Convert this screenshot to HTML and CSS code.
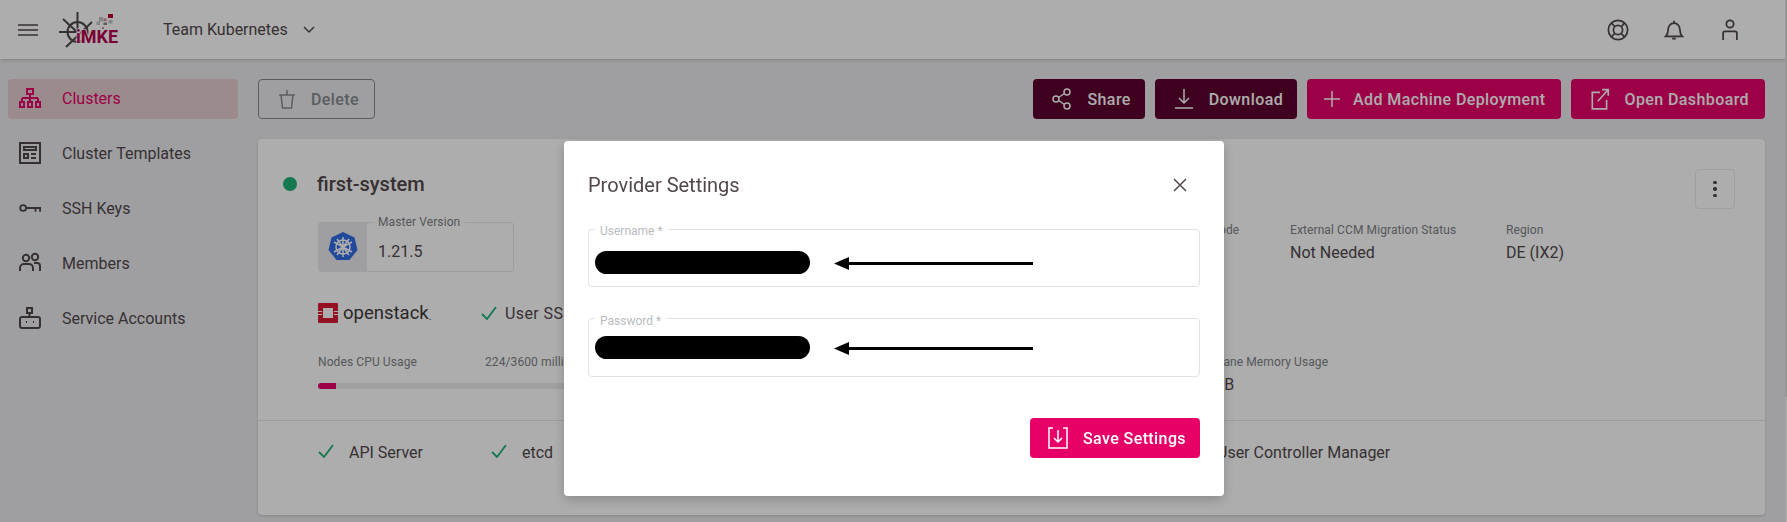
FILE: index.html
```html
<!DOCTYPE html>
<html lang="en">

<head>
    <meta charset="UTF-8">
    <meta name="viewport" content="width=device-width, initial-scale=1.0">
    <title>Cluster details</title>
    <link rel="stylesheet" href="styles.css">
</head>

<body>
    <header class="topbar">
        <svg class="icon-menu" viewBox="0 0 20 12"><path d="M0 1h20M0 6h20M0 11h20" /></svg>
        <div class="logo">
            <svg viewBox="0 0 60 36">
                <g class="wheel">
                    <circle cx="19.500" cy="20" r="10" />
                    <path d="M19.500 0v20M1 20h18M5 7l14 13M34 10L8 35" />
                </g>
                <rect class="pixel-red" x="50" y="2" width="5" height="4" />
                <rect class="pixel-gray" x="41" y="5" width="4" height="4.500" />
                <rect class="pixel-gray" x="38.500" y="9.500" width="3.500" height="3.500" />
                <rect class="pixel-pink" x="45.500" y="6.500" width="3" height="2.500" />
                <rect class="pixel-dark" x="45.500" y="10.500" width="3.500" height="2.500" />
                <rect class="pixel-gray" x="50.500" y="8" width="4" height="3.500" />
                <rect class="pixel-pink" x="44" y="15" width="2" height="2" />
                <text class="logo-text" x="18" y="31">iMKE</text>
            </svg>
        </div>
        <div class="team">Team Kubernetes</div>
        <svg class="icon-chevron" viewBox="0 0 12 8"><path d="M1 1l5 5 5-5" /></svg>
        <div class="top-icons">
            <svg viewBox="0 0 24 24"><circle cx="12" cy="12" r="10.500" /><circle cx="12" cy="12" r="5" /><path d="M5 4.500l3.500 4M19 4.500l-3.500 4M5 19.500l3.500-4M19 19.500l-3.500-4" /></svg>
            <svg viewBox="0 0 24 24"><path d="M3 19c2-2 2.500-3 2.500-7 0-4 2.500-7.500 6.500-7.500s6.500 3.500 6.500 7.500c0 4 .5 5 2.500 7zM12 2v2.500M10 21.500h4" /></svg>
            <svg viewBox="0 0 24 24"><circle cx="12" cy="5.500" r="4" /><path d="M4.500 23v-7.500a2 2 0 0 1 2-2h11a2 2 0 0 1 2 2V23" /></svg>
        </div>
    </header>

    <div class="page">
        <nav class="sidebar">
            <a class="nav-item active">
                <svg viewBox="0 0 22 20"><path d="M8 1h6v5H8zM11 6v4M3 10h16M3 10v4M11 10v4M19 10v4M1 14h4v5H1zM9 14h4v5H9zM17 14h4v5h-4z" /></svg>
                Clusters
            </a>
            <a class="nav-item">
                <svg viewBox="0 0 22 22"><path d="M1 1h20v20H1zM5 5h12v3H5zM5 12h4v4H5zM12 12h5M12 16h5" /></svg>
                Cluster Templates
            </a>
            <a class="nav-item">
                <svg viewBox="0 0 24 12"><circle cx="4.500" cy="6" r="3.200" /><path d="M8 6h15v4M18 6v4" /></svg>
                SSH Keys
            </a>
            <a class="nav-item">
                <svg viewBox="0 0 22 20"><circle cx="7" cy="5" r="3.200" /><circle cx="16" cy="4" r="3.200" /><path d="M1 18v-3a4 4 0 0 1 4-4h5a4 4 0 0 1 4 4v3M15 10h3a3 3 0 0 1 3 3v5" /></svg>
                Members
            </a>
            <a class="nav-item">
                <svg viewBox="0 0 22 22"><path d="M8 1h5v5H8zM10.500 6v4M3 10h16a2 2 0 0 1 2 2v7a2 2 0 0 1-2 2H3a2 2 0 0 1-2-2v-7a2 2 0 0 1 2-2zM7 15h1M14 15h1" /></svg>
                Service Accounts
            </a>
        </nav>

        <main class="main">
            <div class="actions">
                <button class="btn btn-outline">
                    <svg viewBox="0 0 16 19"><path d="M0 5h16M8 0v5M2 5l1.500 13h9L14 5" /></svg>
                    Delete
                </button>
                <div class="actions-right">
                    <button class="btn btn-dark">
                        <svg viewBox="0 0 20 22"><circle cx="4" cy="11" r="3" /><circle cx="15" cy="4" r="3" /><circle cx="15" cy="18" r="3" /><path d="M6.500 9.500l6-4M6.500 12.500l6 4" /></svg>
                        Share
                    </button>
                    <button class="btn btn-dark">
                        <svg viewBox="0 0 20 22"><path d="M10 1v14M5 10l5 5 5-5M1 20h18" /></svg>
                        Download
                    </button>
                    <button class="btn btn-primary btn-add">
                        <svg class="small" viewBox="0 0 16 16"><path d="M8 0v16M0 8h16" /></svg>
                        Add Machine Deployment
                    </button>
                    <button class="btn btn-primary">
                        <svg viewBox="0 0 18 20"><path d="M9 4H2v15h13v-8M7 12l9-10M11 1.500h5.500V7" /></svg>
                        Open Dashboard
                    </button>
                </div>
            </div>

            <section class="card">
                <div class="card-top">
                    <div class="card-title">
                        <span class="dot"></span>
                        <h2>first-system</h2>
                    </div>
                    <button class="kebab"><span></span><span></span><span></span></button>

                    <div class="info-row">
                        <div class="version">
                            <div class="version-icon">
                                <svg viewBox="0 0 32 32">
                                    <path class="k8s" d="M16 1l11.500 5.500 3 12.500-8 10H9.500l-8-10 3-12.500z" />
                                    <g class="k8s-wheel">
                                        <circle cx="16" cy="16" r="7" />
                                        <path d="M16 6v20M7 11l18 10M25 11L7 21M10 8l12 16M22 8L10 24" />
                                    </g>
                                </svg>
                            </div>
                            <div class="version-value">
                                <span class="version-label">Master Version</span>
                                1.21.5
                            </div>
                        </div>
                        <div class="info info-proxy"><span class="label">Proxy Mode</span><span>ipvs</span></div>
                        <div class="info info-ccm"><span class="label">External CCM Migration Status</span><span>Not Needed</span></div>
                        <div class="info"><span class="label">Region</span><span>DE (IX2)</span></div>
                    </div>

                    <div class="provider-row">
                        <div class="openstack">
                            <svg viewBox="0 0 20 20"><path class="os-red" d="M1 0h18a1 1 0 0 1 1 1v18a1 1 0 0 1-1 1H1a1 1 0 0 1-1-1V1a1 1 0 0 1 1-1zM5 5v10h10V5zM0 8v1h4V8zM0 11v1h4v-1zM16 8v1h4V8zM16 11v1h4v-1z" /></svg>
                            openstack<small>.</small>
                        </div>
                        <div class="check-item">
                            <svg class="check" viewBox="0 0 16 14"><path d="M1 8l5 5 9-12" /></svg>
                            User SSH Keys Agent
                        </div>
                    </div>

                    <div class="usage-row">
                        <div class="usage">
                            <div class="usage-head"><span>Nodes CPU Usage</span><span class="usage-num">224/3600 millicores</span></div>
                            <div class="bar"><div class="bar-fill" style="width: 4.5%"></div></div>
                        </div>
                        <div class="info info-memory"><span class="label">Control Plane Memory Usage</span><span>320.4MB</span></div>
                    </div>
                </div>

                <div class="health">
                    <div class="health-item">
                        <svg class="check" viewBox="0 0 16 14"><path d="M1 8l5 5 9-12" /></svg>
                        API Server
                    </div>
                    <div class="health-item">
                        <svg class="check" viewBox="0 0 16 14"><path d="M1 8l5 5 9-12" /></svg>
                        etcd
                    </div>
                    <div class="health-item health-last">User Controller Manager</div>
                </div>
            </section>
        </main>
    </div>

    <div class="scrollbar"><div class="scrollbar-thumb"></div></div>

    <div class="overlay"></div>

    <div class="dialog">
        <div class="dialog-head">
            <h3>Provider Settings</h3>
            <svg class="icon-close" viewBox="0 0 14 14"><path d="M1 1l12 12M13 1L1 13" /></svg>
        </div>
        <div class="field">
            <span class="field-label">Username *</span>
            <div class="field-value">
                <span class="redacted"></span>
                <svg class="arrow" viewBox="0 0 199 14"><path d="M14 6h185v3H14zM0 7.500L15 1v13z" /></svg>
            </div>
        </div>
        <div class="field field-password">
            <span class="field-label">Password *</span>
            <div class="field-value">
                <span class="redacted"></span>
                <svg class="arrow" viewBox="0 0 199 14"><path d="M14 6h185v3H14zM0 7.500L15 1v13z" /></svg>
            </div>
        </div>
        <div class="dialog-foot">
            <button class="btn btn-save">
                <svg viewBox="0 0 20 22"><path d="M5 1H1v20h18V1h-4M10 3v12M6 11l4 4 4-4" /></svg>
                Save Settings
            </button>
        </div>
    </div>
</body>

</html>
```

FILE: styles.css
```css
* {
    box-sizing: border-box;
}

html,
body {
    height: 100%;
    overflow: hidden;
}

body {
    margin: 0;
    font-family: Roboto, sans-serif;
    font-size: 16px;
    color: #52484c;
    background-color: #eaebee;
}

svg {
    fill: none;
    stroke: currentColor;
    stroke-width: 1.5;
    flex-shrink: 0;
}

.topbar {
    display: flex;
    align-items: center;
    height: 59px;
    padding-left: 18px;
    background-color: #ffffff;
    box-shadow: 0 1px 4px rgba(0, 0, 0, .2);
}

.icon-menu {
    width: 20px;
    height: 12px;
    margin-right: 20px;
    stroke-width: 1.6;
}

.logo {
    width: 60px;
    height: 36px;
    margin-right: 45px;
}

.logo svg {
    width: 60px;
    height: 36px;
    display: block;
    overflow: visible;
}

.wheel {
    stroke: #52484c;
    stroke-width: 2;
}

.pixel-red {
    fill: #b8002f;
    stroke: none;
}

.pixel-gray {
    fill: #c4c4c4;
    stroke: none;
}

.pixel-dark {
    fill: #8a8a8a;
    stroke: none;
}

.pixel-pink {
    fill: #c98a9c;
    stroke: none;
}

.logo-text {
    fill: #b8004f;
    stroke: #ffffff;
    stroke-width: 1.5;
    paint-order: stroke;
    font-family: Roboto, sans-serif;
    font-weight: 700;
    font-size: 18px;
}

.team {
    margin-right: 15px;
}

.icon-chevron {
    width: 12px;
    height: 8px;
}

.top-icons {
    display: flex;
    gap: 34px;
    margin-left: auto;
    margin-right: 46px;
}

.top-icons svg {
    width: 22px;
    height: 22px;
    stroke-width: 1.9;
}

.page {
    display: flex;
    padding-top: 20px;
}

.sidebar {
    display: flex;
    flex-direction: column;
    gap: 15px;
    width: 258px;
    padding-left: 8px;
    padding-right: 20px;
    flex-shrink: 0;
}

.nav-item {
    display: flex;
    align-items: center;
    height: 40px;
    padding-left: 11px;
    padding-bottom: 2px;
    gap: 21px;
    border-radius: 4px;
}

.nav-item svg {
    width: 22px;
    height: 22px;
    stroke-width: 2;
}

.nav-item.active {
    background-color: #e6cdd0;
    color: #e60067;
}

.main {
    width: 1507px;
}

.actions {
    display: flex;
    justify-content: space-between;
    height: 40px;
}

.actions-right {
    display: flex;
    gap: 10px;
}

.btn {
    display: flex;
    align-items: center;
    height: 40px;
    padding: 0 16px 0 19px;
    gap: 15px;
    border: none;
    border-radius: 4px;
    font-family: inherit;
    font-size: 16px;
    font-weight: 500;
    letter-spacing: .4px;
    white-space: nowrap;
    color: #ffffff;
}

.btn svg {
    width: 20px;
    height: 22px;
}

.btn svg.small {
    width: 16px;
    height: 16px;
}

.btn-add {
    gap: 13px;
    padding-left: 17px;
    padding-right: 15px;
}

.btn-outline {
    width: 117px;
    padding-left: 20px;
    gap: 16px;
    background: none;
    border: 1px solid #868a90;
    color: #868a90;
}

.btn-outline svg {
    width: 16px;
    height: 19px;
}

.btn-dark {
    padding-right: 14px;
    background-color: #5d002e;
}

.btn-primary {
    background-color: #e60067;
}

.card {
    height: 376px;
    margin-top: 20px;
    border-radius: 4px;
    background-color: #ffffff;
    box-shadow: 0 1px 3px rgba(0, 0, 0, .15);
}

.card-top {
    position: relative;
    height: 282px;
    padding: 0 60px;
    border-bottom: 1px solid #e6e6e6;
}

.card-title {
    display: flex;
    align-items: center;
    gap: 20px;
    height: 83px;
    padding-top: 6px;
    margin-left: -35px;
}

.card-title h2 {
    margin: 0;
    font-size: 20px;
    font-weight: 500;
}

.dot {
    width: 14px;
    height: 14px;
    border-radius: 50%;
    background-color: #1eb377;
}

.kebab {
    position: absolute;
    top: 30px;
    right: 30px;
    display: flex;
    flex-direction: column;
    align-items: center;
    justify-content: center;
    gap: 3px;
    width: 40px;
    height: 40px;
    padding: 0;
    border: 1px solid #ececec;
    border-radius: 4px;
    background: none;
}

.kebab span {
    width: 3.5px;
    height: 3.5px;
    border-radius: 50%;
    background-color: #52484c;
}

.info-row {
    display: flex;
    height: 50px;
}

.version {
    display: flex;
    width: 196px;
    height: 50px;
    border: 1px solid #e8e8e8;
    border-radius: 4px;
}

.version-icon {
    display: flex;
    align-items: center;
    justify-content: center;
    width: 49px;
    margin: -1px 0 -1px -1px;
    border-radius: 4px 0 0 4px;
    background-color: #eaebee;
}

.version-icon svg {
    width: 32px;
    height: 32px;
}

.k8s {
    fill: #326ce5;
    stroke: none;
}

.k8s-wheel {
    stroke: #ffffff;
    stroke-width: 1.5;
}

.version-value {
    position: relative;
    padding: 19px 0 0 11px;
    line-height: 19px;
}

.version-label {
    position: absolute;
    top: -8px;
    left: 6px;
    padding: 0 5px;
    font-size: 12px;
    line-height: 14px;
    letter-spacing: .1px;
    color: #7e8287;
    background-color: #ffffff;
    white-space: nowrap;
}

.info {
    display: flex;
    flex-direction: column;
    gap: 6px;
    padding-top: 1px;
}

.info-proxy {
    margin-left: 661px;
    width: 115px;
}

.info-ccm {
    width: 216px;
}

.label {
    font-size: 12px;
    line-height: 14px;
    letter-spacing: .1px;
    color: #7e8287;
}

.provider-row {
    display: flex;
    align-items: center;
    height: 30px;
    margin-top: 26px;
}

.openstack {
    display: flex;
    align-items: center;
    gap: 5px;
    width: 163px;
    font-size: 18.5px;
    color: #3f3a3b;
}

.openstack svg {
    width: 20px;
    height: 20px;
    stroke: none;
}

.os-red {
    fill: #da1a32;
    fill-rule: evenodd;
}

.openstack small {
    font-size: 10px;
    margin-top: 6px;
    margin-left: -5px;
}

.check-item,
.health-item {
    display: flex;
    align-items: center;
    gap: 8px;
    white-space: nowrap;
}

.check-item {
    letter-spacing: .4px;
}

.check {
    width: 16px;
    height: 14px;
    color: #1eb377;
    stroke-width: 1.8;
}

.health-item .check {
    margin-bottom: 3px;
}

.usage-row {
    display: flex;
    margin-top: 27px;
}

.usage {
    width: 400px;
}

.usage-head {
    display: flex;
    justify-content: space-between;
    font-size: 12px;
    line-height: 14px;
    letter-spacing: .1px;
    color: #7e8287;
}

.usage-num {
    width: 233px;
}

.bar {
    height: 6px;
    margin-top: 14px;
    border-radius: 3px;
    background-color: #ececec;
    overflow: hidden;
}

.bar-fill {
    height: 100%;
    background-color: #e60067;
}

.info-memory {
    margin-left: 452px;
    padding-top: 0;
}

.health {
    display: flex;
    align-items: center;
    height: 62px;
    padding-left: 60px;
}

.health-item {
    gap: 15px;
    width: 173px;
}

.health-last {
    margin-left: 553px;
}

.scrollbar {
    position: fixed;
    top: 0;
    right: 0;
    bottom: 0;
    width: 2px;
    background-color: #f8f8f8;
}

.scrollbar-thumb {
    height: 397px;
    background-color: #dddee1;
}

.overlay {
    position: fixed;
    inset: 0;
    background-color: rgba(0, 0, 0, .32);
}

.dialog {
    position: fixed;
    top: 141px;
    left: 564px;
    width: 660px;
    height: 355px;
    padding: 24px;
    border-radius: 4px;
    background-color: #ffffff;
    box-shadow: 0 4px 12px rgba(0, 0, 0, .2);
}

.dialog-head {
    display: flex;
    align-items: center;
    justify-content: space-between;
    height: 40px;
    padding-right: 13px;
}

.dialog-head h3 {
    margin: 0;
    font-size: 20px;
    font-weight: 400;
}

.icon-close {
    width: 14px;
    height: 14px;
}

.field {
    position: relative;
    height: 58px;
    margin-top: 24px;
    border: 1px solid #e2e2e2;
    border-radius: 4px;
}

.field-password {
    height: 59px;
    margin-top: 31px;
}

.field-label {
    position: absolute;
    top: -6px;
    left: 6px;
    padding: 0 5px;
    font-size: 12px;
    line-height: 14px;
    color: #b9bcc0;
    background-color: #ffffff;
}

.field-password .field-label {
    top: -5px;
}

.field-value {
    display: flex;
    align-items: center;
    gap: 24px;
    margin: 21px 0 0 6px;
}

.field-password .field-value {
    margin-top: 17px;
}

.redacted {
    width: 215px;
    height: 23px;
    border-radius: 12px;
    background-color: #000000;
}

.arrow {
    width: 199px;
    height: 14px;
    fill: #000000;
    stroke: none;
}

.dialog-foot {
    display: flex;
    justify-content: flex-end;
    margin-top: 41px;
}

.btn-save {
    width: 170px;
    padding: 0 10px 0 18px;
    background-color: #e60067;
}
```
